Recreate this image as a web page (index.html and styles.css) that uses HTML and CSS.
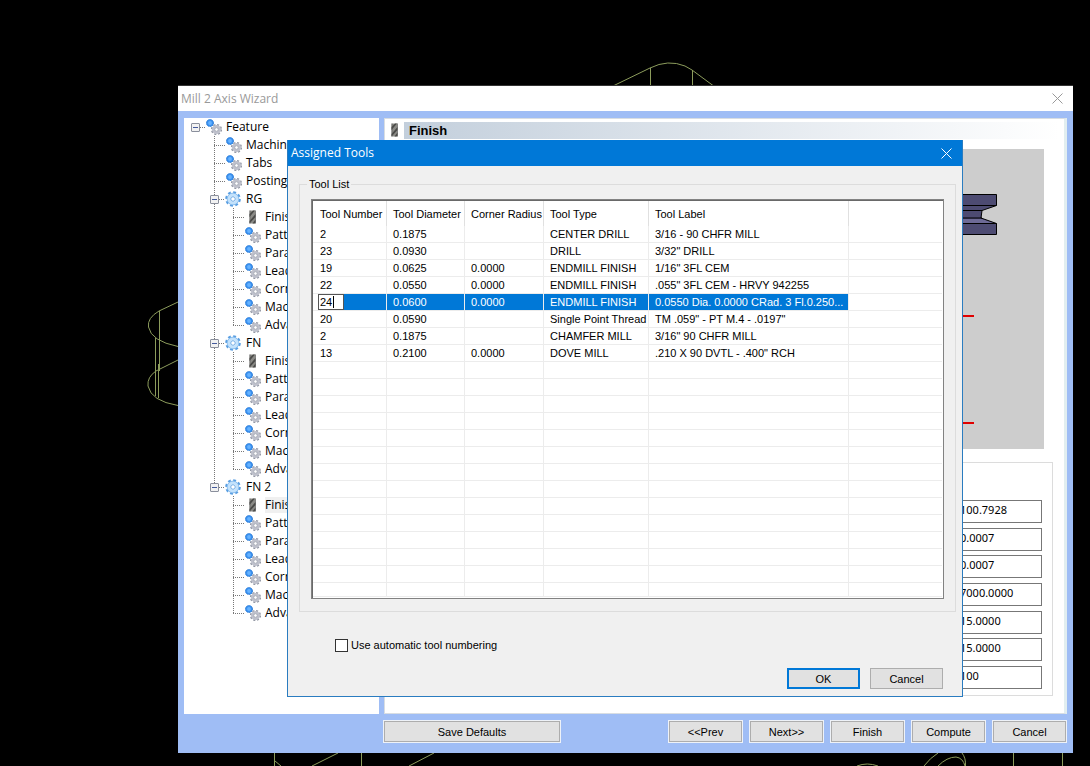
FILE: index.html
```html
<!DOCTYPE html>
<html lang="en">
<head>
<meta charset="utf-8">
<title>Mill 2 Axis Wizard</title>
<link rel="stylesheet" href="styles.css">
</head>
<body>
<svg class="wireframe" aria-hidden="true">
  <path d="M614 85.500L650 68Q668 59 685 66L692 70L713 85.500M650.500 68V86M692.500 70V86"/>
  <path d="M178 302L159 311Q147 318 148.500 327Q151 341 178 346.500M178 360L156 371Q147 377 148 386Q151 401 178 405.500M159.500 311V371M155.500 338V396M158.500 364V398"/>
  <path d="M274.500 753V766M275 761L281 766M312 766L338 753M361.500 753V766M409 766L434 753"/>
  <path d="M857 766Q867 762 878 766M924 766Q930 758 938 753M938 766Q947 757 956 757Q963 758 965 766M962 753Q966 758 965.500 766M1013.500 753V766M1062.500 753V766"/>
</svg>

<svg class="defs" aria-hidden="true">
  <defs>
    <symbol id="gear" viewBox="0 0 16 16">
      <circle cx="8" cy="8" r="6.800" fill="none" stroke="#5a9fe2" stroke-width="2" stroke-dasharray="2.900 2.441"/>
      <circle cx="8" cy="8" r="4.400" fill="#fff" stroke="#c3e2fc" stroke-width="3"/>
      <circle cx="8" cy="8" r="5.900" fill="none" stroke="#5a9fe2" stroke-width=".6"/>
      <circle cx="8" cy="8" r="2.300" fill="#fff" stroke="#5a9fe2" stroke-width=".9"/>
    </symbol>
    <symbol id="gears" viewBox="0 0 16 16">
      <circle cx="10.500" cy="10.500" r="4.700" fill="none" stroke="#9297a4" stroke-width="1.800" stroke-dasharray="2 1.691"/>
      <circle cx="10.500" cy="10.500" r="3.200" fill="#fff" stroke="#bfc1cc" stroke-width="2.600"/>
      <circle cx="10.500" cy="10.500" r="1.800" fill="#fff" stroke="#8d92a0" stroke-width=".7"/>
      <circle cx="4" cy="4" r="3.500" fill="#3c92f0" stroke="#2375d2" stroke-width="1" stroke-dasharray="1.400 .8"/>
      <circle cx="4" cy="4" r="1.900" fill="#65b2ff"/>
    </symbol>
    <symbol id="mill" viewBox="0 0 16 16">
      <path d="M4.500 1.500h6v13h-6z" fill="#8a8a86"/>
      <path d="M4.500 5L8 1.500h2L4.500 8zM4.500 12l6-7v3l-6 6.500zM7.500 14.500l3-4v3l-1 1z" fill="#4a4a48"/>
      <path d="M5 1.500v13M10.500 1.500v13" stroke="#555" stroke-width=".6"/>
    </symbol>
  </defs>
</svg>

<main class="window wizard">
  <header class="titlebar">
    <span>Mill 2 Axis Wizard</span>
    <button class="close" aria-label="Close wizard"><svg viewBox="0 0 11 11"><path d="M.5.500l10 10M10.500.500l-10 10"/></svg></button>
  </header>
  <div class="workspace">
    <nav class="tree">
      <div class="node"><span class="expander"></span><span class="twig short"></span><svg><use href="#gears"/></svg><span>Feature</span></div>
      <ul class="branch root">
        <li class="node"><span class="twig"></span><svg><use href="#gears"/></svg><span>Machine</span></li>
        <li class="node"><span class="twig"></span><svg><use href="#gears"/></svg><span>Tabs</span></li>
        <li class="node"><span class="twig"></span><svg><use href="#gears"/></svg><span>Posting</span></li>
        <li>
          <div class="node parent"><span class="expander"></span><span class="twig short"></span><svg><use href="#gear"/></svg><span>RG</span></div>
          <ul class="branch">
            <li class="node"><span class="twig"></span><svg><use href="#mill"/></svg><span>Finish</span></li>
            <li class="node"><span class="twig"></span><svg><use href="#gears"/></svg><span>Pattern</span></li>
            <li class="node"><span class="twig"></span><svg><use href="#gears"/></svg><span>Params</span></li>
            <li class="node"><span class="twig"></span><svg><use href="#gears"/></svg><span>Leads</span></li>
            <li class="node"><span class="twig"></span><svg><use href="#gears"/></svg><span>Corners</span></li>
            <li class="node"><span class="twig"></span><svg><use href="#gears"/></svg><span>Machine</span></li>
            <li class="node"><span class="twig"></span><svg><use href="#gears"/></svg><span>Advance</span></li>
          </ul>
        </li>
        <li>
          <div class="node parent"><span class="expander"></span><span class="twig short"></span><svg><use href="#gear"/></svg><span>FN</span></div>
          <ul class="branch">
            <li class="node"><span class="twig"></span><svg><use href="#mill"/></svg><span>Finish</span></li>
            <li class="node"><span class="twig"></span><svg><use href="#gears"/></svg><span>Pattern</span></li>
            <li class="node"><span class="twig"></span><svg><use href="#gears"/></svg><span>Params</span></li>
            <li class="node"><span class="twig"></span><svg><use href="#gears"/></svg><span>Leads</span></li>
            <li class="node"><span class="twig"></span><svg><use href="#gears"/></svg><span>Corners</span></li>
            <li class="node"><span class="twig"></span><svg><use href="#gears"/></svg><span>Machine</span></li>
            <li class="node"><span class="twig"></span><svg><use href="#gears"/></svg><span>Advance</span></li>
          </ul>
        </li>
        <li>
          <div class="node parent"><span class="expander"></span><span class="twig short"></span><svg><use href="#gear"/></svg><span>FN 2</span></div>
          <ul class="branch">
            <li class="node"><span class="twig"></span><svg><use href="#mill"/></svg><span class="current">Finish</span></li>
            <li class="node"><span class="twig"></span><svg><use href="#gears"/></svg><span>Pattern</span></li>
            <li class="node"><span class="twig"></span><svg><use href="#gears"/></svg><span>Params</span></li>
            <li class="node"><span class="twig"></span><svg><use href="#gears"/></svg><span>Leads</span></li>
            <li class="node"><span class="twig"></span><svg><use href="#gears"/></svg><span>Corners</span></li>
            <li class="node"><span class="twig"></span><svg><use href="#gears"/></svg><span>Machine</span></li>
            <li class="node"><span class="twig"></span><svg><use href="#gears"/></svg><span>Advance</span></li>
          </ul>
        </li>
      </ul>
    </nav>
    <section class="page">
      <div class="page-head"><svg><use href="#mill"/></svg><h1>Finish</h1></div>
      <div class="preview">
        <svg viewBox="0 0 100 300" aria-hidden="true">
          <path d="M0 45.500H52.500V56.500L38 61.500L37 69L52.500 74.500V85.500H0z" fill="#4d4b72"/>
          <path d="M0 70H38L50 74H0z" fill="#6d6a96"/>
          <path d="M0 45.500H52.500V56.500H0M0 61.500H38M0 69H38M0 74.500H52.500V85.500H0M52.500 56.500L38 61.500L37 69L52.500 74.500" fill="none" stroke="#000"/>
          <path d="M0 167H30M0 274H30" stroke="#e00000" stroke-width="2"/>
        </svg>
      </div>
      <div class="values">
        <input aria-label="Value 1" value="100.7928">
        <input aria-label="Value 2" value="0.0007">
        <input aria-label="Value 3" value="0.0007">
        <input aria-label="Value 4" value="7000.0000">
        <input aria-label="Value 5" value="15.0000">
        <input aria-label="Value 6" value="15.0000">
        <input aria-label="Value 7" value="100">
      </div>
    </section>
  </div>
  <footer class="wizard-actions">
    <button class="save">Save Defaults</button>
    <button>&lt;&lt;Prev</button>
    <button>Next&gt;&gt;</button>
    <button>Finish</button>
    <button>Compute</button>
    <button>Cancel</button>
  </footer>
</main>

<div class="window dialog" role="dialog" aria-labelledby="dialog-title">
  <header class="titlebar">
    <span id="dialog-title">Assigned Tools</span>
    <button class="close" aria-label="Close dialog"><svg viewBox="0 0 11 11"><path d="M.5.500l10 10M10.500.500l-10 10"/></svg></button>
  </header>
  <div class="dialog-body">
    <fieldset>
      <legend>Tool List</legend>
      <div class="list">
        <table>
          <colgroup><col class="c-number"><col class="c-diameter"><col class="c-radius"><col class="c-type"><col class="c-label"><col></colgroup>
          <thead><tr><th>Tool Number</th><th>Tool Diameter</th><th>Corner Radius</th><th>Tool Type</th><th>Tool Label</th><th></th></tr></thead>
          <tbody>
            <tr><td>2</td><td>0.1875</td><td></td><td>CENTER DRILL</td><td>3/16 - 90 CHFR MILL</td><td></td></tr>
            <tr><td>23</td><td>0.0930</td><td></td><td>DRILL</td><td>3/32" DRILL</td><td></td></tr>
            <tr><td>19</td><td>0.0625</td><td>0.0000</td><td>ENDMILL FINISH</td><td>1/16" 3FL CEM</td><td></td></tr>
            <tr><td>22</td><td>0.0550</td><td>0.0000</td><td>ENDMILL FINISH</td><td>.055" 3FL CEM - HRVY 942255</td><td></td></tr>
            <tr class="selected"><td><div class="edit"><input aria-label="Tool Number" value="24"><i class="caret"></i></div></td><td>0.0600</td><td>0.0000</td><td>ENDMILL FINISH</td><td>0.0550 Dia. 0.0000 CRad. 3 Fl.0.250...</td><td></td></tr>
            <tr><td>20</td><td>0.0590</td><td></td><td>Single Point Thread</td><td>TM .059" - PT M.4 - .0197"</td><td></td></tr>
            <tr><td>2</td><td>0.1875</td><td></td><td>CHAMFER MILL</td><td>3/16" 90 CHFR MILL</td><td></td></tr>
            <tr><td>13</td><td>0.2100</td><td>0.0000</td><td>DOVE MILL</td><td>.210 X 90 DVTL - .400" RCH</td><td></td></tr>
            <tr><td></td><td></td><td></td><td></td><td></td><td></td></tr>
            <tr><td></td><td></td><td></td><td></td><td></td><td></td></tr>
            <tr><td></td><td></td><td></td><td></td><td></td><td></td></tr>
            <tr><td></td><td></td><td></td><td></td><td></td><td></td></tr>
            <tr><td></td><td></td><td></td><td></td><td></td><td></td></tr>
            <tr><td></td><td></td><td></td><td></td><td></td><td></td></tr>
            <tr><td></td><td></td><td></td><td></td><td></td><td></td></tr>
            <tr><td></td><td></td><td></td><td></td><td></td><td></td></tr>
            <tr><td></td><td></td><td></td><td></td><td></td><td></td></tr>
            <tr><td></td><td></td><td></td><td></td><td></td><td></td></tr>
            <tr><td></td><td></td><td></td><td></td><td></td><td></td></tr>
            <tr><td></td><td></td><td></td><td></td><td></td><td></td></tr>
            <tr><td></td><td></td><td></td><td></td><td></td><td></td></tr>
            <tr class="tail"><td></td><td></td><td></td><td></td><td></td><td></td></tr>
          </tbody>
        </table>
      </div>
    </fieldset>
    <label class="auto"><input type="checkbox">Use automatic tool numbering</label>
    <div class="dialog-actions">
      <button class="default">OK</button>
      <button>Cancel</button>
    </div>
  </div>
</div>
</body>
</html>
```

FILE: styles.css
```css
* { box-sizing: border-box; }

body {
  margin: 0;
  min-height: 100vh;
  position: relative;
  overflow: hidden;
  background: #000;
  color: #000;
  font: 11px/16px "Liberation Sans", Arial, sans-serif;
}

button, input { font: inherit; color: inherit; border-radius: 0; }
ul { list-style: none; margin: 0; padding: 0; }

.wireframe {
  position: absolute;
  inset: 0;
  width: 100%;
  height: 100%;
  fill: none;
  stroke: #8c9c5c;
  stroke-width: 1;
}
.defs { position: absolute; width: 0; height: 0; }

/* Windows */
.window { position: absolute; display: flex; flex-direction: column; }
.titlebar {
  flex: none;
  display: flex;
  justify-content: space-between;
  align-items: center;
  height: 26px;
  padding-left: 3px;
  font: 12px/16px "Open Sans", "Noto Sans", sans-serif;
}
.close {
  display: flex;
  align-items: center;
  justify-content: center;
  width: 31px;
  height: 24px;
  padding: 0;
  border: 0;
  background: none;
}
.close svg { width: 11px; height: 11px; fill: none; stroke: currentColor; }

.wizard {
  left: 178px;
  right: 17px;
  top: 85px;
  bottom: 13px;
  background: #9fbdf5;
  border-top: 1px solid #333;
}
.wizard > .titlebar { height: 25px; background: #fff; color: #999; }
.workspace {
  flex: 1;
  min-height: 0;
  display: flex;
  gap: 5px;
  padding: 7px 6px 0;
}

/* Feature tree */
.tree {
  flex: none;
  width: 195px;
  overflow: hidden;
  background: #fff;
  font: 12px/16px "Open Sans", "Noto Sans", sans-serif;
}
.tree > .node { padding-left: 7px; }
.node { display: flex; align-items: center; height: 18px; white-space: nowrap; }
.node svg { flex: none; width: 16px; height: 16px; margin-right: 4px; }
.node.parent { margin-left: -4px; }
.node.parent svg { margin-right: 5px; }
.expander {
  flex: none;
  width: 9px;
  height: 9px;
  border: 1px solid #8a8f9c;
  border-radius: 1px;
  background: linear-gradient(#445a9c, #445a9c) center / 5px 1px no-repeat, #f2f2f2;
}
.twig {
  flex: none;
  width: 12px;
  height: 1px;
  background: repeating-linear-gradient(90deg, #777 0 1px, transparent 1px 2px);
}
.twig.short { width: 6px; }
.branch {
  margin-left: 19px;
  background: repeating-linear-gradient(#777 0 1px, transparent 1px 2px) 0 0 / 1px calc(100% - 9px) no-repeat;
}
.branch.root { margin-left: 30px; background-size: 1px calc(100% - 135px); }
.current { background: #f0f0f0; }

/* Wizard page */
.page {
  flex: 1;
  min-width: 0;
  display: flex;
  flex-direction: column;
  align-items: flex-end;
  padding: 3px 5px 17px;
  background: #fff;
  border: 1px solid #d8dde2;
  border-right: 3px solid #e2eef0;
}
.page-head { align-self: stretch; display: flex; height: 17px; }
.page-head svg { width: 16px; height: 16px; margin: 0 1px 0 -3px; }
.page-head h1 {
  flex: 1;
  margin: 0;
  padding-left: 5px;
  background: linear-gradient(90deg, #c3cfdc, #fff);
  font: bold 13px/17px "Liberation Sans", Arial, sans-serif;
}
.preview {
  flex: none;
  width: 600px;
  height: 300px;
  margin: 10px 15px 13px;
  display: flex;
  justify-content: flex-end;
  background: #cdcdcd;
}
.preview svg { width: 100px; height: 300px; }
.values {
  flex: 1;
  width: 653px;
  margin-right: 6px;
  padding: 37px 10px 6px;
  display: flex;
  flex-direction: column;
  align-items: flex-end;
  justify-content: space-between;
  border: 1px solid #dcdcdc;
}
.values input {
  width: 86px;
  height: 23px;
  padding: 0 2px 4px 3px;
  border: 1px solid #777;
  background: #fff;
  font: 11px/16px "Noto Sans", sans-serif;
}

/* Buttons */
.wizard-actions { flex: none; display: flex; gap: 6px; padding: 6px 6px 10px 205px; }
.wizard-actions button, .dialog-actions button {
  padding: 0;
  border: 1px solid #adadad;
  background: #e1e1e1;
}
.wizard-actions button { width: 75px; height: 23px; outline: 1px solid #eef2f8; outline-offset: -1px; border: 2px solid #adadad; }
.wizard-actions .save { width: 178px; margin-right: auto; }

/* Assigned tools dialog */
.dialog {
  left: 287px;
  right: 127px;
  top: 140px;
  border: 1px solid #2a7cc0;
  border-top: 0;
  background: #f0f0f0;
}
.dialog > .titlebar { background: #0078d7; color: #fff; }
.dialog-body { padding: 10px 6px 7px 11px; }
fieldset {
  min-width: 0;
  margin: 0;
  padding: 7px 11px 12px;
  border: 1px solid #dcdcdc;
}
legend { margin-left: -4px; padding: 0 2px; }
.list {
  padding: 1px;
  border: 1px solid #828282;
  background: #fff;
  box-shadow: inset 1px 1px #696969;
}
table { width: 100%; table-layout: fixed; border-collapse: separate; border-spacing: 0; }
.c-number { width: 74px; }
.c-diameter { width: 78px; }
.c-radius { width: 79px; }
.c-type { width: 105px; }
.c-label { width: 200px; }
th, td {
  padding: 0 0 0 6px;
  border-right: 1px solid #ececec;
  text-align: left;
  font-weight: normal;
  white-space: nowrap;
}
th { height: 25px; padding-top: 1px; border-right-color: #e0e0e0; }
td { height: 17px; line-height: 16px; border-bottom: 1px solid #ececec; }
th:first-child, td:first-child { padding-left: 7px; }
th:last-child, td:last-child { border-right: 0; }
.tail td { height: 14px; }
.selected td:not(:last-child) { background: #0078d7; color: #fff; }
.selected td:first-child { padding-left: 5px; background: linear-gradient(90deg, #fff 5px, #0078d7 5px); }
.edit {
  display: flex;
  align-items: center;
  width: 26px;
  height: 16px;
  border: 1px solid #555;
  background: #fff;
  color: #000;
}
.edit input { width: 14px; height: 14px; padding: 0 0 0 1px; border: 0; outline: 0; background: none; }
.caret { width: 1px; height: 12px; background: #000; }

.auto { display: flex; width: max-content; align-items: center; gap: 3px; margin: 25px 0 0 36px; }
.auto input {
  appearance: none;
  width: 13px;
  height: 13px;
  margin: 0;
  border: 1px solid #333;
  background: #fff;
}
.dialog-actions { display: flex; justify-content: flex-end; gap: 10px; margin: 15px 13px 0; }
.dialog-actions button { width: 73px; height: 21px; }
.dialog-actions .default { border: 2px solid #0078d7; }
```
